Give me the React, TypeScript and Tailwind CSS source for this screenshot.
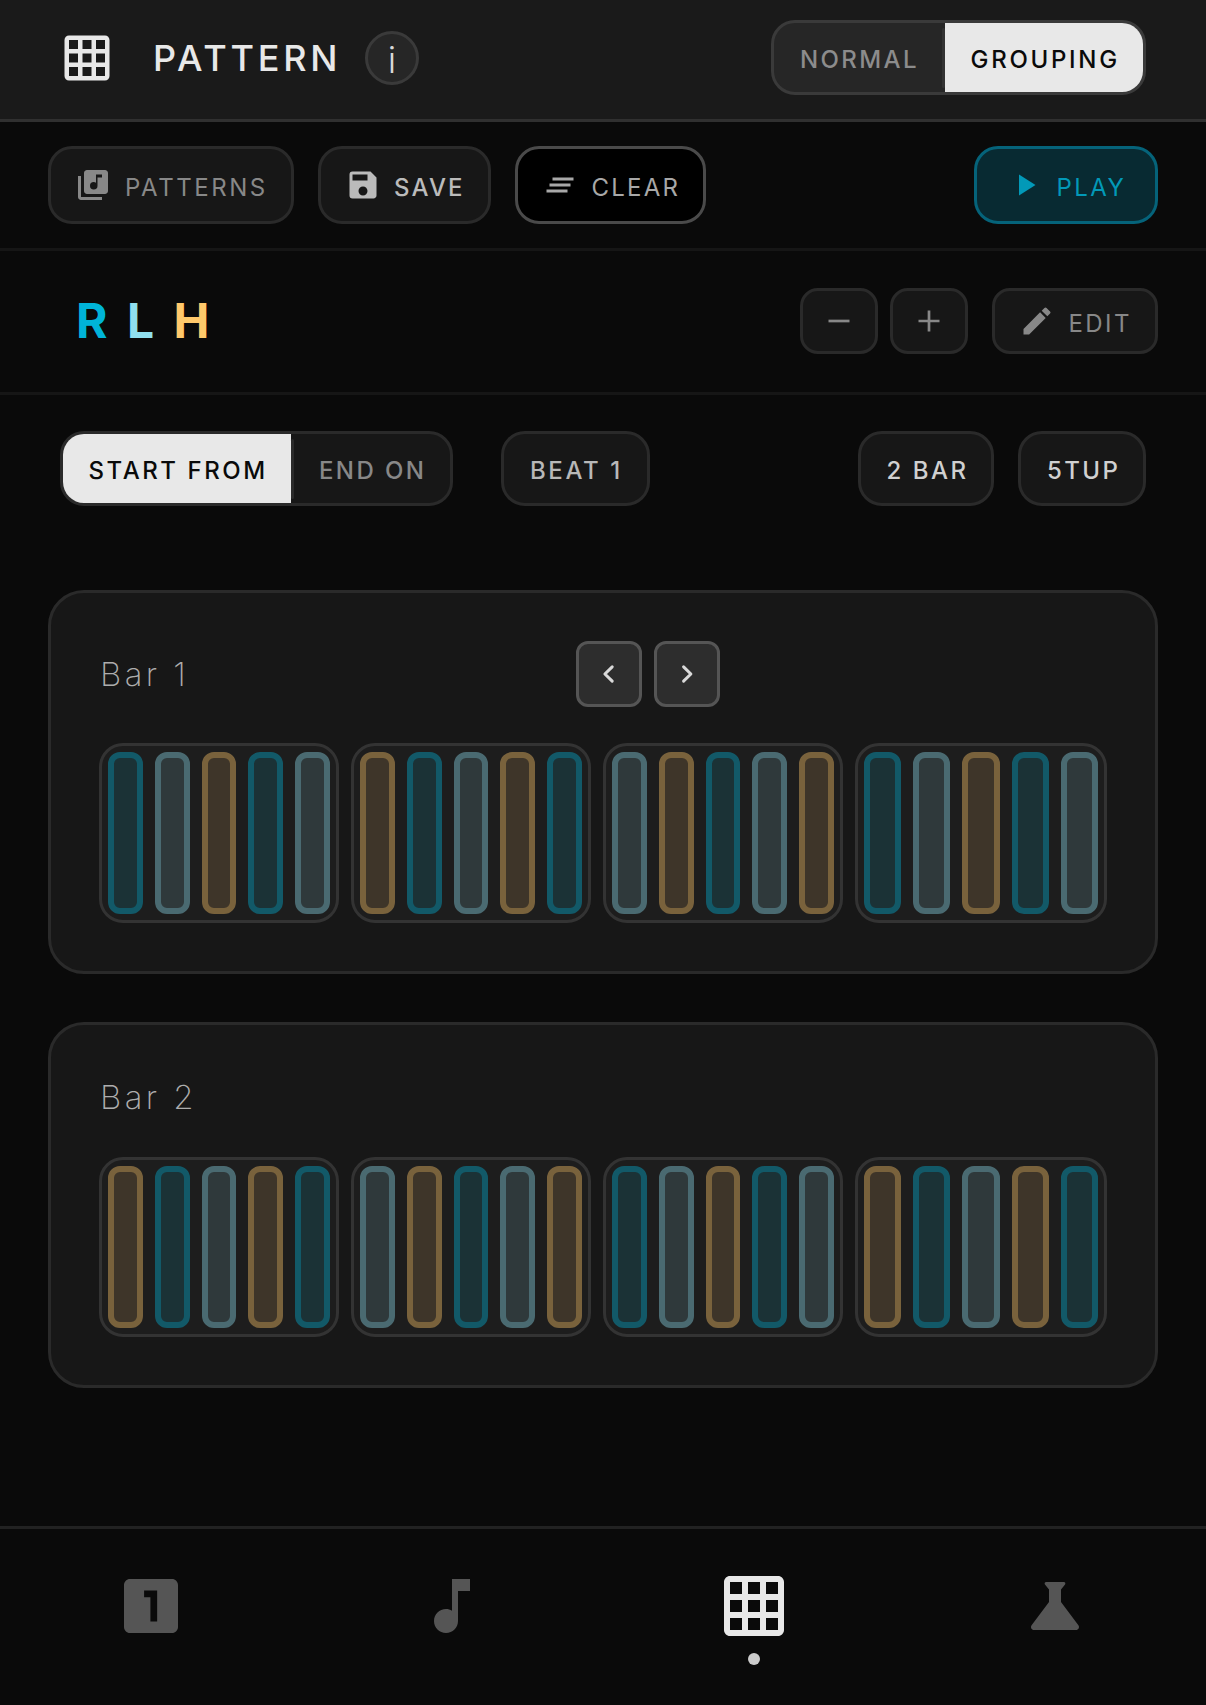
import React from "react";
import {
  MdClearAll,
  MdEdit,
  MdGridOn,
  MdLibraryMusic,
  MdMusicNote,
  MdPlayArrow,
  MdSave,
  MdScience,
} from "react-icons/md";

type Hand = "R" | "L" | "H";

const handStyle: Record<Hand, string> = {
  R: "border-[#125968] bg-[#1b3236]",
  L: "border-[#4a6a71] bg-[#2f393b]",
  H: "border-[#79623c] bg-[#3e3529]",
};

const bars = [
  { name: "Bar 1", arrows: true, groups: ["RLHRL", "HRLHR", "LHRLH", "RLHRL"] },
  { name: "Bar 2", arrows: false, groups: ["HRLHR", "LHRLH", "RLHRL", "HRLHR"] },
];

function Chevron({ left }: { left?: boolean }) {
  return (
    <div className="flex size-[66px] items-center justify-center rounded-[12px] border-[3px] border-[#555] bg-[#2d2d2d]">
      <svg width="24" height="24" viewBox="0 0 24 24" fill="none" stroke="#d9d9d9" strokeWidth="3" strokeLinecap="round" strokeLinejoin="round">
        <path d={left ? "M15.2 4.9 7.9 12l7.3 7.1" : "M8.6 4.9 15.9 12 8.6 19.1"} />
      </svg>
    </div>
  );
}

// Rounded tile with a cut-out marker, used for the first tab.
function FirstTabIcon() {
  return (
    <svg viewBox="0 0 24 24" fill="currentColor" fillRule="evenodd" className="size-[72px]">
      <path d="M19 3H5c-1.1 0-2 .9-2 2v14c0 1.1.9 2 2 2h14c1.1 0 2-.9 2-2V5c0-1.1-.9-2-2-2zM14.050 17.150h-2.250V9.050H9.700V6.800h4.350z" />
    </svg>
  );
}

function Header() {
  return (
    <header className="flex h-[122px] items-center border-b-[3px] border-[#303030] bg-[#1a1a1a] px-[60px] pb-[3px]">
      <MdGridOn className="size-[54px] text-[#e8e8e8]" />
      <h1 className="ml-[39px] w-[212px] text-[36px] font-medium tracking-[3.75px] text-[#e8e8e8]">PATTERN</h1>
      <div className="mb-[1px] flex size-[54px] items-center justify-center rounded-full border-[3px] border-[#3a3a3a] bg-[#262626] pt-[5px] text-[36px] leading-none font-light text-[#d8d8d8]">
        i
      </div>
      <div className="mb-[1px] ml-auto flex h-[75px] w-[375px] items-center overflow-hidden rounded-[24px] border-[3px] border-[#3a3a3a] bg-[#262626] text-[24px] font-medium tracking-[2.4px]">
        <div className="flex h-full w-[168px] items-center pt-[5px] pl-[26px] text-[#8c8c8c]">NORMAL</div>
        <div className="h-[60px] w-[3px] rounded bg-[#333]" />
        <div className="flex h-full flex-1 items-center bg-[#e8e8e8] pt-[5px] pl-[25.5px] tracking-[2.7px] text-[#0a0a0a]">GROUPING</div>
      </div>
    </header>
  );
}

function Toolbar() {
  return (
    <div className="flex h-[129px] items-center border-b-[3px] border-[#161616] px-[48px] text-[24px] tracking-[2.4px]">
      <div className="flex h-[78px] w-[245.5px] items-center gap-[14px] rounded-[24px] border-[3px] border-[#2a2a2a] bg-[#171717] pl-[24px] text-[#888]">
        <MdLibraryMusic className="size-[36px]" />
        <span className="pt-[5px] tracking-[2.55px]">PATTERNS</span>
      </div>
      <div className="ml-[24px] flex h-[78px] w-[173.5px] items-center gap-[13.5px] rounded-[24px] border-[3px] border-[#2a2a2a] bg-[#171717] pl-[24px] text-[#bbb]">
        <MdSave className="size-[36px]" />
        <span className="pt-[5px] font-medium tracking-[2.1px]">SAVE</span>
      </div>
      <div className="ml-[24px] flex h-[78px] w-[191px] items-center gap-[13.5px] rounded-[24px] border-[3px] border-[#4a4a4a] bg-black pl-[24px] text-[#a8a8a8]">
        <MdClearAll className="size-[36px]" />
        <span className="pt-[5px] tracking-[2.2px]">CLEAR</span>
      </div>
      <div className="ml-auto flex h-[78px] w-[184px] items-center gap-[13.5px] rounded-[24px] border-[3px] border-[#05637a] bg-[#082a32] pl-[30px] text-[#0299b8]">
        <MdPlayArrow className="size-[36px]" />
        <span className="pt-[5px]">PLAY</span>
      </div>
    </div>
  );
}

function StickingRow() {
  return (
    <div className="flex h-[144px] items-center border-b-[3px] border-[#161616] pr-[48px] pl-[76px]">
      <div className="mb-[1px] flex text-[48px] font-[650]">
        <span className="w-[51px] text-[#00b4d8]">R</span>
        <span className="w-[46.5px] text-[#90e0ef]">L</span>
        <span className="text-[#ffc96b]">H</span>
      </div>
      <div className="mb-[1px] ml-auto flex gap-[12px]">
        {["M5 12h14", "M5 12h14M12 5v14"].map((d) => (
          <div key={d} className="flex h-[66px] w-[78px] items-center justify-center rounded-[18px] border-[3px] border-[#2a2a2a] bg-[#171717]">
            <svg width="36" height="36" viewBox="0 0 24 24" stroke="#888" strokeWidth="1.8">
              <path d={d} />
            </svg>
          </div>
        ))}
        <div className="ml-[12px] flex h-[66px] w-[166px] items-center gap-[13.5px] rounded-[18px] border-[3px] border-[#2a2a2a] bg-[#171717] pl-[24px] text-[24px] tracking-[2.4px] text-[#888]">
          <MdEdit className="size-[36px]" />
          <span className="pt-[5px]">EDIT</span>
        </div>
      </div>
    </div>
  );
}

function Options() {
  return (
    <div className="flex h-[75px] items-stretch px-[60px] text-[24px] font-medium tracking-[2.4px]">
      <div className="flex w-[393px] items-center overflow-hidden rounded-[24px] border-[3px] border-[#2a2a2a] bg-[#171717]">
        <div className="flex h-full w-[228px] items-center bg-[#e8e8e8] pt-[4px] pl-[25.5px] tracking-[2.55px] text-[#0a0a0a]">START FROM</div>
        <div className="h-[60px] w-[3px] rounded bg-[#2a2a2a]" />
        <div className="flex h-full flex-1 items-center pt-[4px] pl-[25px] text-[#888]">END ON</div>
      </div>
      <div className="ml-[48px] flex w-[148.5px] items-center rounded-[24px] border-[3px] border-[#2a2a2a] bg-[#171717] pt-[4px] pl-[26px] tracking-[2.6px] text-[#b8b8b8]">BEAT 1</div>
      <div className="ml-auto flex w-[136px] items-center rounded-[24px] border-[3px] border-[#2a2a2a] bg-[#171717] pt-[4px] pl-[25.5px] tracking-[2.5px] text-[#d0d0d0]">2 BAR</div>
      <div className="ml-[24px] flex w-[128px] items-center rounded-[24px] border-[3px] border-[#2a2a2a] bg-[#171717] pt-[4px] pl-[26px] text-[#d0d0d0]">5TUP</div>
    </div>
  );
}

function BarCard({ name, arrows, groups }: (typeof bars)[number]) {
  return (
    <section className="rounded-[36px] border-[3px] border-[#2a2a2a] bg-[#171717] p-[48px]">
      <div className={arrows ? "flex h-[66px] items-center" : "flex h-[48px] items-center"}>
        <h2 className="w-[477px] pl-px text-[33px] font-[250] tracking-[3.4px] text-[#adadad]">{name}</h2>
        {arrows && (
          <div className="flex gap-[12px]">
            <Chevron left />
            <Chevron />
          </div>
        )}
      </div>
      <div className="mt-[36px] flex gap-[12px]">
        {groups.map((group, i) => (
          <div
            key={i}
            className="flex h-[180px] w-[240px] gap-[12px] rounded-[24px] border-[3px] border-[#333] bg-[#1d1d1d] p-[6px] last:w-[252px]"
          >
            {group.split("").map((hand, j) => (
              <div key={j} className={`flex-1 rounded-[12px] border-[6px] ${handStyle[hand as Hand]}`} />
            ))}
          </div>
        ))}
      </div>
    </section>
  );
}

function BottomNav() {
  return (
    <nav className="mt-auto grid h-[179px] grid-cols-4 justify-items-center border-t-[3px] border-[#222] pt-[41px] text-[#555]">
      <FirstTabIcon />
      <MdMusicNote className="size-[72px]" />
      <div className="flex flex-col items-center gap-[11px] text-[#e8e8e8]">
        <MdGridOn className="size-[72px]" />
        <span className="size-[12px] rounded-full bg-[#ccc]" />
      </div>
      <MdScience className="size-[72px]" />
    </nav>
  );
}

export default function App() {
  return (
    <div className="flex h-[1705px] w-[1206px] flex-col overflow-hidden bg-[#0a0a0a] font-['Inter',sans-serif] leading-none whitespace-nowrap">
      <Header />
      <Toolbar />
      <StickingRow />
      <main className="pt-[36px]">
        <Options />
        <div className="mt-[84px] flex flex-col gap-[48px] px-[48px]">
          {bars.map((bar) => (
            <BarCard key={bar.name} {...bar} />
          ))}
        </div>
      </main>
      <BottomNav />
    </div>
  );
}
